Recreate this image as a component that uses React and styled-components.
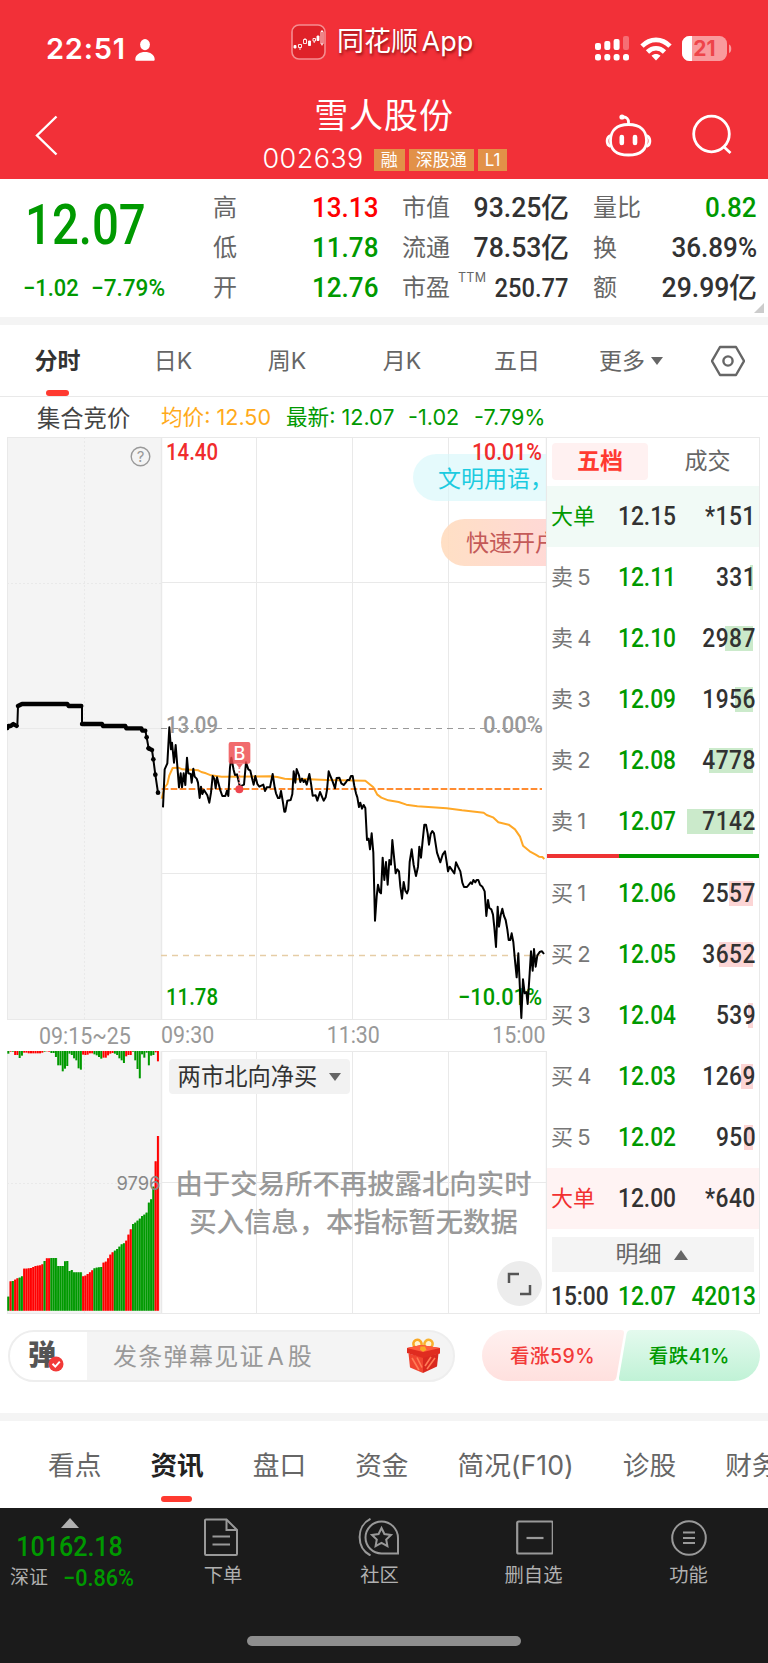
import React from "react"
import styled, { createGlobalStyle, css } from "styled-components"

const theme = {
  colors: {
    red: "#f23038",
    up: "#ff0000",
    down: "#009900",
    accent: "#ff3a30",
    text: "#323232",
    label: "#666666",
    muted: "#999999",
    line: "#e9e9e9",
    gray: "#f4f4f4",
    dark: "#1b1b1b",
  },
  fonts: {
    text: `Inter, "Noto Sans CJK SC", sans-serif`,
    num: `Roboto, "Noto Sans CJK SC", sans-serif`,
  },
}

const GlobalStyle = createGlobalStyle`
  * { box-sizing: border-box; }
  body {
    margin: 0;
    background: #fff;
    font-family: ${theme.fonts.text};
    line-height: 1.25;
    color: ${theme.colors.text};
  }
  svg { display: block; flex: none; }
`

const flexCenter = css`
  display: flex;
  align-items: center;
  justify-content: center;
`

const Page = styled.div`
  width: 768px;
  height: 1663px;
  overflow: hidden;
  display: flex;
  flex-direction: column;
`

// condensed digits, squeezed towards the side they are aligned to
const Num = styled.span`
  display: inline-block;
  font-family: ${theme.fonts.num};
  font-weight: ${p => p.$weight || 500};
  font-size: ${p => p.$size || 28}px;
  letter-spacing: ${p => p.$ls || 0}px;
  transform: scaleX(${p => p.$sx || 0.91});
  transform-origin: ${p => p.$from || "left"} center;
  color: ${p => p.$color || theme.colors.text};
  white-space: pre;
`

const Gap = styled.div`
  height: 8px;
  flex: none;
  background: ${theme.colors.gray};
`

/* ---------- header ---------- */

const Header = styled.header`
  height: 179px;
  flex: none;
  background: ${theme.colors.red};
  color: #fff;
`

const StatusBar = styled.div`
  height: 92px;
  display: grid;
  grid-template-columns: 244px 1fr 178px;
`

const Clock = styled.div`
  display: flex;
  align-items: center;
  gap: 9px;
  padding: 7px 0 0 46px;
  font-size: 29px;
  font-weight: 600;
  letter-spacing: 0.8px;
`

const AppBrand = styled.div`
  display: flex;
  align-items: center;
  gap: 11px;
  padding: 0 0 8px 47px;
  font-size: 27px;
  word-spacing: -4px;
  text-shadow: 1px 2px 3px rgba(90, 0, 0, 0.7);
  white-space: pre;
`

const StatusIcons = styled.div`
  display: flex;
  align-items: center;
  gap: 10px;
  padding: 5px 0 0 5px;
`

const TitleBar = styled.div`
  height: 87px;
  display: grid;
  grid-template-columns: 230px 1fr 230px;
`

const BackSlot = styled.div`
  padding: 23px 0 0 35px;
`

const TitleSlot = styled.div`
  display: flex;
  flex-direction: column;
  align-items: center;
`

const StockName = styled.h1`
  margin: 3px 0 0;
  font-size: 34px;
  line-height: 41px;
  font-weight: 400;
  letter-spacing: 0.9px;
`

const CodeRow = styled.div`
  display: flex;
  align-items: center;
  gap: 4px;
  height: 28px;
  margin: 9px 0 0 2px;
  font-size: 27px;
  font-weight: 300;
  line-height: 28px;
  span {
    margin-right: 6px;
    letter-spacing: 0.4px;
  }
`

const Tag = styled.em`
  font-style: normal;
  font-weight: 400;
  height: 22px;
  margin-top: 1px;
  padding: 0 7px;
  line-height: 22px;
  background: #e29148;
  font-size: 17px;
`

const TitleActions = styled.div`
  display: flex;
  gap: 40px;
  padding: 21px 0 0 67px;
`

/* ---------- quote ---------- */

const Quote = styled.section`
  position: relative;
  height: 138px;
  flex: none;
  display: grid;
  grid-template-columns: 189px 165px 167px 164px;
  column-gap: 24px;
`

const PriceBlock = styled.div`
  padding: 16px 0 0 23px;
`

const BigPrice = styled.div`
  height: 60px;
  line-height: 60px;
  padding-left: 2px;
`

const ChangeRow = styled.div`
  display: flex;
  gap: 7px;
  margin-top: 19px;
  line-height: 28px;
`

const StatColumn = styled.div`
  padding-top: 9px;
`

const Stat = styled.div`
  height: 40px;
  display: flex;
  align-items: center;
  font-size: 24px;
  line-height: 36px;
  color: ${theme.colors.label};
  white-space: nowrap;
  sup {
    font-size: 12.5px;
    line-height: 13px;
    align-self: flex-start;
    margin: 3px 0 0 8px;
    letter-spacing: 0.3px;
  }
`

const StatValue = styled.span`
  display: flex;
  align-items: center;
  margin-left: auto;
  b {
    font-weight: 500;
    font-size: 28px;
    color: ${theme.colors.text};
  }
`

const Corner = styled.i`
  position: absolute;
  right: 4px;
  bottom: 4px;
  border: 5px solid #ccc;
  border-top-color: transparent;
  border-left-color: transparent;
`

/* ---------- period tabs ---------- */

const PeriodTabs = styled.nav`
  height: 72px;
  flex: none;
  display: grid;
  grid-template-columns: 115px 116px 112px 118px 112px 116px 1fr;
  border-bottom: 1px solid ${theme.colors.line};
`

const PeriodTab = styled.div`
  ${flexCenter};
  position: relative;
  gap: 6px;
  padding: 1px ${p => p.$shift || 0}px 0 0;
  font-size: 23px;
  color: ${p => (p.$active ? "#323232" : theme.colors.label)};
  font-weight: ${p => (p.$active ? 700 : 400)};
  ${p => p.$active && css`
    &::after {
      content: "";
      position: absolute;
      left: 46px;
      bottom: 0;
      width: 23px;
      height: 6px;
      border-radius: 3px;
      background: ${theme.colors.accent};
    }
  `}
`

const Caret = styled.i`
  border: ${p => p.$half || 6}px solid transparent;
  border-bottom: 0;
  border-top: 8px solid #666;
  ${p => p.$up && css`
    border-top: 0;
    border-bottom: 10px solid ${p.$color || "#666"};
  `}
`

const InfoRow = styled.div`
  height: 40px;
  flex: none;
  display: grid;
  grid-template-columns: 124px 125px 122px 66px 1fr;
  align-items: center;
  padding: 0 0 0 37px;
  font-size: 21.6px;
  color: ${theme.colors.down};
  white-space: pre;
`

const AuctionLabel = styled.span`
  font-size: 23.3px;
  padding-top: 4px;
  color: #444;
`

const Average = styled.span`
  color: #ffaa1a;
`

/* ---------- chart ---------- */

const Board = styled.section`
  height: 877px;
  flex: none;
  display: grid;
  grid-template-columns: 540px 213px;
  padding-left: 7px;
`

const ChartColumn = styled.div`
  position: relative;
  overflow: hidden;
`

const TimeAxis = styled.div`
  height: 31px;
  display: grid;
  grid-template-columns: 122px 1fr 1fr 1fr;
  align-items: start;
  padding: 0 1px 0 32px;
`

const AxisTime = styled(Num)`
  justify-self: ${p => p.$from || "left"};
  line-height: ${p => p.$lh || 30}px;
`

const Barrage = styled.div`
  position: absolute;
  left: ${p => p.$left}px;
  top: ${p => p.$top}px;
  width: 200px;
  height: 47px;
  border-radius: 24px;
  padding-left: 25px;
  font-size: 23px;
  line-height: ${p => p.$lh || 49}px;
  color: ${p => p.$color};
  background: ${p => p.$bg};
`

const ChartMask = styled.div`
  position: absolute;
  left: 0;
  top: 0;
  width: 539px;
  height: 583px;
  overflow: hidden;
`

const ChartOverlay = styled.div`
  position: absolute;
  left: 0;
  top: 0;
`

const IndicatorSelect = styled.div`
  position: absolute;
  left: 162px;
  top: 622px;
  width: 181px;
  height: 35px;
  padding-top: 1px;
  border-radius: 4px;
  background: #f2f2f2;
  ${flexCenter};
  gap: 12px;
  font-size: 23.3px;
  color: #323232;
`

const EmptyNote = styled.p`
  position: absolute;
  left: 154px;
  top: 728px;
  width: 385px;
  margin: 0;
  text-align: center;
  font-size: 27.4px;
  font-weight: 500;
  line-height: 38px;
  color: ${theme.colors.muted};
`

const ExpandButton = styled.div`
  position: absolute;
  left: 490px;
  top: 824px;
  width: 45px;
  height: 45px;
  border-radius: 50%;
  background: #ececec;
  ${flexCenter};
`

/* ---------- order book ---------- */

const Book = styled.aside`
  height: 877px;
  border: 1px solid ${theme.colors.line};
  border-left: 0;
`

const BookTabs = styled.div`
  height: 48px;
  display: grid;
  grid-template-columns: 96px 1fr;
  column-gap: 11px;
  padding: 5px 3px 6px 5px;
`

const BookTab = styled.div`
  ${flexCenter};
  border-radius: 4px;
  font-size: 23px;
  color: ${p => (p.$active ? theme.colors.accent : theme.colors.label)};
  background: ${p => (p.$active ? "#fff1f1" : "none")};
  font-weight: ${p => (p.$active ? 700 : 400)};
`

const BookRow = styled.div`
  height: ${p => p.$h || 61}px;
  display: grid;
  grid-template-columns: 67px 60px 1fr;
  align-items: center;
  padding: 0 3px 0 4px;
  font-size: 22px;
  word-spacing: -2px;
  color: ${p => p.$color || "#777"};
  background: ${p => p.$bg || "none"};
  white-space: pre;
`

const Volume = styled.div`
  position: relative;
  height: 25px;
  display: flex;
  align-items: center;
  justify-content: flex-end;
`

const VolumeBar = styled.i`
  position: absolute;
  right: 3px;
  top: 0;
  height: 25px;
  background: ${p => p.$bg};
`

const VolumeNum = styled(Num)`
  position: relative;
`

const Ratio = styled.div`
  height: 4px;
  margin: 2px 0 5px;
  background: linear-gradient(90deg, #ee3333 34%, ${theme.colors.down} 34%);
`

const DetailToggle = styled.div`
  ${flexCenter};
  gap: 12px;
  height: 35px;
  margin: 8px 5px 7px;
  padding-right: 3px;
  background: ${theme.colors.gray};
  font-size: 23px;
  color: ${theme.colors.label};
`

/* ---------- comment bar ---------- */

const CommentBar = styled.div`
  height: 99px;
  flex: none;
  display: flex;
  align-items: flex-start;
  justify-content: space-between;
  padding: 16px 8px 0;
`

const CommentInput = styled.div`
  width: 447px;
  height: 52px;
  display: flex;
  align-items: center;
  overflow: hidden;
  border: 2px solid #eee;
  border-radius: 26px;
  padding-right: 13px;
  background: ${theme.colors.gray};
  font-size: 24px;
  letter-spacing: 1.3px;
  word-spacing: -5.5px;
  color: ${theme.colors.muted};
`

const BarrageToggle = styled.div`
  position: relative;
  width: 77px;
  height: 48px;
  padding-left: 18px;
  margin-right: 26px;
  background: #fff;
  font-size: 28px;
  line-height: 46px;
  font-weight: 900;
  color: #555;
  svg {
    position: absolute;
    left: 38px;
    top: 24px;
  }
`

const Placeholder = styled.span`
  flex: 1;
  padding-top: 1px;
`

const Poll = styled.div`
  position: relative;
  width: 278px;
  height: 51px;
`

const PollLabels = styled.div`
  position: absolute;
  inset: 0;
  display: flex;
  justify-content: space-between;
  padding: 0 30px 0 28px;
  font-size: 19.5px;
  font-weight: 500;
  letter-spacing: 0.5px;
  line-height: 53px;
  color: #f23a38;
  b {
    font-weight: 500;
    color: ${theme.colors.down};
  }
`

/* ---------- news tabs ---------- */

const NewsTabs = styled.nav`
  height: 87px;
  flex: none;
  display: flex;
  gap: 49px;
  padding: 0 0 0 48px;
  white-space: nowrap;
`

const NewsTab = styled.div`
  position: relative;
  flex: none;
  line-height: 89px;
  font-size: 26.7px;
  color: ${p => (p.$active ? "#222" : theme.colors.label)};
  font-weight: ${p => (p.$active ? 700 : 400)};
  ${p => p.$active && css`
    &::after {
      content: "";
      position: absolute;
      left: 11px;
      top: 75px;
      width: 31px;
      height: 6px;
      border-radius: 3px;
      background: ${theme.colors.accent};
    }
  `}
`

/* ---------- bottom bar ---------- */

const BottomBar = styled.footer`
  height: 155px;
  flex: none;
  background: ${theme.colors.dark};
  display: flex;
  flex-direction: column;
  align-items: center;
  justify-content: space-between;
  padding-bottom: 17px;
`

const BottomRow = styled.div`
  width: 768px;
  display: grid;
  grid-template-columns: 145px 156px 157px 151px 159px;
`

const IndexBox = styled.div`
  display: flex;
  flex-direction: column;
  align-items: center;
  padding: 10px 6px 0 0;
  line-height: 38px;
`

const IndexRow = styled.div`
  display: flex;
  align-items: center;
  gap: 15px;
  align-self: flex-start;
  margin: -2px -20px 0 10px;
  line-height: 28px;
  font-size: 19px;
  white-space: nowrap;
  color: #b0b0b0;
`

const NavItem = styled.div`
  display: flex;
  flex-direction: column;
  align-items: center;
  gap: 6px;
  padding-top: 10px;
  font-size: 19.3px;
  line-height: 26px;
  color: #b0b0b0;
`

const HomeIndicator = styled.div`
  width: 274px;
  height: 10px;
  border-radius: 5px;
  background: #8e8e8e;
`

/* ---------- icons ---------- */

const PersonIcon = () => (
  <svg width="20" height="22" viewBox="0 0 20 22" fill="#fff">
    <ellipse cx="10" cy="5.6" rx="4.9" ry="5.6" />
    <path d="M0.3 20.5C0.3 15.5 5 13 10 13s9.7 2.5 9.7 7.5c0 0.8-0.5 1.3-1.3 1.3H1.6c-0.8 0-1.3-0.5-1.3-1.3z" />
  </svg>
)

const BrandIcon = () => (
  <svg width="35" height="36" viewBox="0 0 35 36" fill="none">
    <rect x="1" y="1" width="33" height="34" rx="7" fill="#df2229" stroke="#f58d90" strokeWidth="1.6" />
    <g stroke="#fff" strokeWidth="0.9">
      <path fill="#fff" d="M3 21.500h2v2.500H3zM17.500 17h2v4.500h-2zM26 12h2v4.500h-2z" />
      <path d="M7.500 20.500h3v3h-3zM9 23.500v2.500M12.500 15.500h3v4h-3zM14 14v1.500M22 14.500h2.500v2.500H22zM23.200 17v2M30 7.500h2V20h-2zM31 6v1.500M31 20v1.500" />
    </g>
  </svg>
)

const SignalIcon = () => (
  <svg width="35" height="25" viewBox="0 0 35 25" fill="#fff">
    <rect x="0" y="7" width="6" height="7" rx="2" />
    <rect x="9.300" y="5" width="6" height="9" rx="2" />
    <rect x="18.600" y="3" width="6" height="11" rx="2" />
    <rect x="28" y="0" width="6" height="14" rx="2" opacity="0.3" />
    {[0, 9.3, 18.6, 28].map(x => (
      <rect key={x} x={x} y="18" width="6" height="6.500" rx="2.500" />
    ))}
  </svg>
)

const WifiIcon = () => (
  <svg width="32" height="24" viewBox="0 0 32 24" fill="none" stroke="#fff" strokeWidth="4.600">
    <path d="M2 9.200C10 0.800 22 0.800 30 9.200" />
    <path d="M7.500 15C12.500 10 19.500 10 24.500 15" />
    <path d="M16 23.500l-4.500-4.800c2.600-2.200 6.400-2.200 9 0z" fill="#fff" stroke="none" />
  </svg>
)

const BatteryIcon = () => (
  <svg width="50" height="26" viewBox="0 0 50 26">
    <rect width="45" height="25" rx="7.500" fill="#f99a9d" />
    <path d="M7.500 0H10v25H7.500A7.500 7.500 0 0 1 0 17.500v-10A7.500 7.500 0 0 1 7.500 0z" fill="#fff" />
    <path d="M47 8.500c3 1 3 7.500 0 8.500z" fill="#f99a9d" />
    <text x="22.500" y="20" textAnchor="middle" fontFamily="Inter" fontWeight="700" fontSize="21" fill="#ee4449">21</text>
  </svg>
)

const BackIcon = () => (
  <svg width="23" height="41" viewBox="0 0 23 41" fill="none" stroke="#fff" strokeWidth="2.400">
    <path d="M21.500 1.500L2 20.500l19.500 19" />
  </svg>
)

const RobotIcon = () => (
  <svg width="47" height="44" viewBox="0 0 47 44" fill="none" stroke="#fff" strokeWidth="2.800">
    <path d="M23.500 11.500C36 11.500 41.500 18 41.500 27.500S36 42 23.500 42S5.500 37 5.500 27.500S11 11.500 23.500 11.500z" />
    <path d="M5.500 22.500C1 24 1 32 5.500 33.500M41.500 22.500C46 24 46 32 41.500 33.500" />
    <path d="M23.500 11.500V9c0-3-2-5-5-5" />
    <circle cx="17" cy="4" r="2.600" fill="#fff" stroke="none" />
    <path d="M16.800 24v6M30 24v6" strokeWidth="4.600" strokeLinecap="round" />
  </svg>
)

const SearchIcon = () => (
  <svg width="40" height="42" viewBox="0 0 40 42" fill="none" stroke="#fff" strokeWidth="2.800">
    <circle cx="19.500" cy="21" r="17.800" />
    <path d="M31.500 33.500l7 6.500" />
  </svg>
)

const HexIcon = () => (
  <svg width="34" height="32" viewBox="0 0 34 32" fill="none" stroke="#666" strokeWidth="2.400">
    <path d="M9 2h16l8 14-8 14H9L1 16z" strokeLinejoin="round" />
    <circle cx="17" cy="16" r="4.600" />
  </svg>
)

const ExpandIcon = () => (
  <svg width="25" height="24" viewBox="0 0 25 24" fill="none" stroke="#555" strokeWidth="2.500">
    <path d="M2 11V2h10M23 13v9H13" />
  </svg>
)

const CheckBadge = () => (
  <svg width="16" height="16" viewBox="0 0 16 16" fill="none">
    <circle cx="8" cy="8" r="7.500" fill="#f23a38" />
    <path d="M4.500 7.800l2.800 2.800 4.500-5" stroke="#fff" strokeWidth="2" />
  </svg>
)

const GiftIcon = () => (
  <svg width="33" height="36" viewBox="0 0 33 36">
    <ellipse cx="10.500" cy="6" rx="4" ry="4.300" fill="#fff3d0" stroke="#f9a825" strokeWidth="2.600" transform="rotate(-25 10.500 6)" />
    <ellipse cx="21.500" cy="6" rx="4" ry="4.300" fill="#fff3d0" stroke="#f9b22f" strokeWidth="2.600" transform="rotate(25 21.500 6)" />
    <path d="M1.500 15.500L16 19v16L3 29.500z" fill="#f0442f" />
    <path d="M31.500 15.500L16 19v16l14-6.500z" fill="#d9281f" />
    <path d="M5 20l7 12M10 19.500l5 10M28 20l-8 11M24 19l-6 9" stroke="#ff7b55" strokeWidth="1.600" />
    <path d="M0 10l14-3 19 3v5.500L16 20 0 15z" fill="#e02c20" />
    <path d="M0 10l14-3 19 3-17 4z" fill="#ff5b3d" />
    <path d="M13.500 8.500h4.500l1.500 3.500-3.500 1.800-3-2z" fill="#f9a825" />
  </svg>
)

const PollShape = () => (
  <svg width="278" height="51" viewBox="0 0 278 51">
    <defs>
      <linearGradient id="bull" x1="0" y1="0" x2="0" y2="1">
        <stop offset="0" stopColor="#fff0ef" />
        <stop offset="1" stopColor="#ffe0de" />
      </linearGradient>
      <linearGradient id="bear" x1="0" y1="0" x2="0" y2="1">
        <stop offset="0" stopColor="#e4faee" />
        <stop offset="1" stopColor="#c0f2d6" />
      </linearGradient>
    </defs>
    <path d="M25.500 0H139q3.500 0 3 3.500L134.500 47q-0.800 4-4.500 4H25.500a25.500 25.500 0 0 1 0-51z" fill="url(#bull)" />
    <path d="M149 0H252.500a25.500 25.500 0 0 1 0 51H140q-3.500 0-3-3.500L144.500 4q0.800-4 4.500-4z" fill="url(#bear)" />
  </svg>
)

const OrderIcon = () => (
  <svg width="40" height="38" viewBox="0 0 40 38" fill="none" stroke="#999" strokeWidth="2">
    <path d="M3 1.500h20.500L34 12v24a1 1 0 0 1-1 1H3a1 1 0 0 1-1-1V2.500a1 1 0 0 1 1-1z" />
    <path d="M23.500 1.500V12H34M9.500 18.500h17.500M9.500 26.500h17.500" />
  </svg>
)

const CommunityIcon = () => (
  <svg width="44" height="38" viewBox="0 0 44 38" fill="none" stroke="#999" strokeWidth="2">
    <path d="M23.500 3.500A16.500 16.500 0 0 1 40 20v15.500H23.500a16 16 0 0 1 0-32z" />
    <path d="M12.500 0.800C-2 8 -2 30 12.500 37.500" />
    <path d="M23.500 10l2.900 6 6.600 0.900-4.800 4.600 1.200 6.600-5.900-3.200-5.900 3.200 1.200-6.600-4.800-4.600 6.600-0.900z" />
  </svg>
)

const RemoveIcon = () => (
  <svg width="38" height="38" viewBox="-1 0 38 38" fill="none" stroke="#999" strokeWidth="2.200">
    <rect x="1.200" y="3.500" width="35.600" height="32" rx="1.500" />
    <path d="M10.500 20h17" />
  </svg>
)

const MenuIcon = () => (
  <svg width="38" height="38" viewBox="0 0 38 38" fill="none" stroke="#999" strokeWidth="2">
    <circle cx="19" cy="20" r="16.800" />
    <path d="M13 14.500h12M13 20h12M13 25h12" />
  </svg>
)

/* ---------- chart data ---------- */

// intraday price, three units per pixel
const PRICE =
  "9,382 14,268 22,250 28,142 33,208 36,188 42,248 47,195 57,322 62,280 66,322 71,280 76,315 81,233 85,280 92,282 95,308 100,266 104,290 110,296 114,308 119,354 123,320 127,342 132,330 142,346 148,368 153,338 158,288 163,296 167,325 171,292 180,328 187,348 196,348 201,332 205,348 210,262 214,233 221,270 225,285 231,283 240,322 247,316 252,314 258,247 265,268 271,272 276,294 281,314 286,288 292,312 298,320 310,314 315,333 320,322 330,322 338,282 344,322 348,340 354,354 359,354 363,333 368,362 373,395 376,395 382,362 392,360 397,342 401,274 406,308 410,267 417,286 421,306 426,296 431,306 435,300 440,314 448,282 453,310 458,347 467,346 472,362 480,336 491,362 497,352 501,330 506,274 511,288 517,302 525,325 530,294 538,293 544,310 551,315 557,308 562,300 568,300 573,288 578,288 583,318 588,340 592,352 597,381 601,368 606,386 611,375 616,384 621,480 626,476 630,508 635,460 640,518 645,722 650,650 654,614 659,636 663,640 668,533 673,600 678,546 683,614 688,540 693,554 697,480 707,580 712,568 717,574 721,620 726,656 731,606 736,632 741,640 745,628 749,546 755,508 761,555 768,588 774,560 778,500 783,533 788,482 793,434 798,434 803,460 807,494 812,462 817,453 822,460 831,518 841,547 848,524 855,514 860,546 864,574 869,560 883,580 888,547 894,560 901,574 907,608 912,621 921,621 932,607 936,612 940,600 946,607 950,600 955,600 960,614 967,620 974,634 979,708 984,660 988,684 994,688 999,704 1003,742 1008,801 1013,680 1017,740 1022,706 1027,686 1032,708 1037,720 1042,748 1046,780 1051,780 1055,760 1060,786 1065,842 1070,892 1075,820 1080,930 1084,1014 1089,898 1094,940 1099,936 1103,972 1109,880 1113,814 1118,872 1122,807 1127,860 1132,826 1140,815 1146,814 1152,822"

const AVERAGE =
  "5,356 14,322 22,312 28,286 38,264 55,263 67,268 115,271 124,276 138,280 153,286 185,290 330,289 352,291 374,296 398,298 430,297 500,300 616,302 640,322 652,344 664,353 685,361 716,366 739,374 772,379 860,385 906,391 971,398 980,405 999,412 1015,427 1046,434 1065,448 1080,470 1089,497 1109,514 1127,524 1137,530 1147,531 1153,537"

// call auction price before the open
const AUCTION =
  "22,898 24,888 32,888 40,882 52,888 54,828 66,822 202,822 206,828 246,828 246,882 306,882 308,888 376,888 378,895 424,895 426,902 436,902 440,922 446,955 456,960 460,988 466,1034 474,1088"
const AUCTION_RUNS =
  "M22 894L25 888H32L40 882 50 888M54 828L66 822H202L206 828H244M246 882H306L309 888H376L379 895H424L427 902H436M446 955L456 960"
const AUCTION_DOTS = [[440, 922], [446, 955], [460, 988], [466, 1034], [474, 1088]]

// [color, unmatched volume, matched volume] per auction tick
const AUCTION_BARS = [
  ["g", 8, 42], ["r", 2, 88], ["g", 2, 89], ["r", 12, 93], ["r", 12, 97], ["g", 21, 99], ["g", 14, 103],
  ["r", 5, 126], ["r", 5, 126], ["r", 7, 127], ["r", 7, 128], ["r", 7, 131], ["r", 7, 134], ["r", 7, 135], ["r", 7, 136],
  ["r", 5, 139], ["g", 2, 149], ["r", 1, 157], ["r", 2, 157], ["g", 6, 158], ["g", 6, 158], ["g", 18, 158],
  ["g", 43, 134], ["g", 43, 134], ["g", 61, 134], ["g", 53, 148], ["g", 45, 149], ["g", 8, 119], ["g", 12, 122],
  ["g", 22, 115], ["g", 28, 115], ["g", 52, 115], ["g", 56, 115], ["r", 11, 103], ["r", 12, 105], ["r", 11, 110],
  ["r", 7, 115], ["r", 7, 121], ["g", 10, 127], ["g", 13, 129], ["g", 18, 130], ["g", 23, 131], ["r", 20, 144],
  ["r", 20, 147], ["r", 13, 157], ["r", 8, 168], ["r", 6, 175], ["g", 8, 180], ["g", 12, 185], ["g", 22, 192],
  ["g", 28, 199], ["g", 36, 202], ["r", 16, 210], ["r", 12, 228], ["r", 12, 244], ["g", 2, 260], ["g", 28, 264],
  ["g", 54, 270], ["g", 82, 276], ["g", 10, 284], ["g", 20, 288], ["g", 5, 294], ["g", 43, 324], ["g", 14, 334],
  ["g", 12, 372], ["r", 4, 448], ["r", 31, 524],
]

const DinText = ({ x, y, w, color, size = 24, children }) => (
  <text x={x} y={y} textLength={w} lengthAdjust="spacingAndGlyphs" fontFamily="Roboto" fontWeight="500" fontSize={size} fill={color}>
    {children}
  </text>
)

const PriceGrid = () => (
  <svg width="540" height="583" viewBox="7 437 540 583" fill="none">
    <rect x="7" y="437" width="154" height="583" fill="#f4f4f4" />
    <g stroke="#e9e9e9">
      <path d="M7.500 437V1020M7 437.500H547M7 728.500H161M161 582.500H546M161 873.500H546M7 1019.500H546M256.500 437V1020M352.500 437V1020M448.500 437V1020" />
      <path d="M161.500 437V1020M546.500 437V1020" strokeWidth="1.500" />
      <path d="M84.500 437V1020M7 583.500H161" strokeDasharray="2 2" />
    </g>
  </svg>
)

const PriceLines = () => (
  <svg width="540" height="583" viewBox="7 437 540 583" fill="none">
    <path d="M161 728.500H546" stroke="#999" strokeWidth="1.200" strokeDasharray="6 5" />
    <path d="M161 955.500H544" stroke="#e6cda6" strokeWidth="1.300" strokeDasharray="6 5" />
    <DinText x="166" y="733" w="52" color="#999">13.09</DinText>
    <DinText x="483" y="733" w="60" color="#999">0.00%</DinText>
    <DinText x="166" y="1005" w="52" color="#009900">11.78</DinText>
    <DinText x="458" y="1005" w="84" color="#009900">−10.01%</DinText>
    <g transform="translate(160 680) scale(0.333333)" strokeLinejoin="round">
      <polyline points={AVERAGE} stroke="#ffa827" strokeWidth="6" />
      <path d="M5 327H1146" stroke="#ff8c32" strokeWidth="6" strokeDasharray="20 7" />
      <polyline points={PRICE} stroke="#000" strokeWidth="6" />
      <rect x="206" y="186" width="65" height="65" rx="6" fill="#ee4a4d" fillOpacity="0.82" />
      <path d="M228 251h21l-10 14z" fill="#f0686b" />
      <path d="M238 262V322" stroke="#f58a8c" strokeWidth="5" strokeDasharray="5 6" />
      <circle cx="238" cy="328" r="12" fill="#ee4650" />
      <text x="238.500" y="239" textAnchor="middle" fontFamily="Inter" fontSize="54" fontWeight="500" fill="#fff">B</text>
    </g>
    <g transform="translate(0 430) scale(0.333333)" stroke="#000" strokeLinejoin="round">
      <polyline points={AUCTION} strokeWidth="6" />
      <path d={AUCTION_RUNS} strokeWidth="13" strokeLinecap="round" />
      {AUCTION_DOTS.map(([x, y]) => <circle key={x} cx={x} cy={y} r="7" fill="#000" stroke="none" />)}
    </g>
    <DinText x="166" y="460" w="52" color="#f02c2c">14.40</DinText>
    <DinText x="472" y="460" w="70" color="#f02c2c">10.01%</DinText>
    <circle cx="140.500" cy="456.500" r="9.300" stroke="#999" strokeWidth="1.400" />
    <text x="140.500" y="462" textAnchor="middle" fontFamily="Inter" fontSize="15" fill="#999">?</text>
  </svg>
)

const VolumeChart = () => (
  <svg width="540" height="263" viewBox="7 1051 540 263" fill="none">
    <rect x="7" y="1051" width="154" height="263" fill="#f4f4f4" />
    <g stroke="#e9e9e9">
      <path d="M7.500 1051V1314M161 1051.500H546M161 1182.500H546M7 1313.500H547M256.500 1051V1314M352.500 1051V1314M448.500 1051V1314" />
      <path d="M161.500 1051V1314M546.500 1051V1314" strokeWidth="1.500" />
      <path d="M84.500 1051V1313M7 1183.500H161" strokeDasharray="2 2" />
    </g>
    <g transform="translate(0 1010) scale(0.333333)">
      {AUCTION_BARS.map(([c, top, h], i) => {
        const x = 22 + i * 6.8
        const fill = c === "g" ? "#009900" : "#ff0000"
        return (
          <g key={i} fill={fill}>
            <rect x={x} y={902 - h} width="5.600" height={h} />
            <rect x={x} y={902 - h} width="6.800" height={h} fillOpacity="0.55" />
            <rect x={x} y="123" width="6" height={top} />
          </g>
        )
      })}
    </g>
    <text x="116.500" y="1190" textLength="44" lengthAdjust="spacingAndGlyphs" fontFamily="Inter" fontSize="19" fill="#888">9796</text>
  </svg>
)

/* ---------- content ---------- */

const STATS = [
  [{ label: "高", value: "13.13", color: "#ff0000" }, { label: "低", value: "11.78", color: "#009900" }, { label: "开", value: "12.76", color: "#009900" }],
  [{ label: "市值", value: "93.25", unit: "亿" }, { label: "流通", value: "78.53", unit: "亿" }, { label: "市盈", value: "250.77", sup: "TTM" }],
  [{ label: "量比", value: "0.82", color: "#009900" }, { label: "换", value: "36.89%" }, { label: "额", value: "29.99", unit: "亿" }],
]

const ASKS = [["卖 5", "12.11", 331], ["卖 4", "12.10", 2987], ["卖 3", "12.09", 1956], ["卖 2", "12.08", 4778], ["卖 1", "12.07", 7142]]
const BIDS = [["买 1", "12.06", 2557], ["买 2", "12.05", 3652], ["买 3", "12.04", 539], ["买 4", "12.03", 1269], ["买 5", "12.02", 950]]

const Level = ({ row, bg }) => {
  const [label, price, volume] = row
  return (
    <BookRow>
      <span>{label}</span>
      <Num $size={25} $color="#009900">{price}</Num>
      <Volume>
        <VolumeBar $bg={bg} style={{ width: volume / 108 }} />
        <VolumeNum $size={25} $ls={0.5} $from="right">{volume}</VolumeNum>
      </Volume>
    </BookRow>
  )
}

const BigOrder = ({ color, bg, price, volume }) => (
  <BookRow $color={color} $bg={bg}>
    <span>大单</span>
    <Num $size={25}>{price}</Num>
    <Volume><VolumeNum $size={25} $ls={0.5} $from="right">{volume}</VolumeNum></Volume>
  </BookRow>
)

const App = () => (
  <Page>
    <GlobalStyle />
    <Header>
      <StatusBar>
        <Clock>22:51<PersonIcon /></Clock>
        <AppBrand><BrandIcon />同花顺 App</AppBrand>
        <StatusIcons><SignalIcon /><WifiIcon /><BatteryIcon /></StatusIcons>
      </StatusBar>
      <TitleBar>
        <BackSlot><BackIcon /></BackSlot>
        <TitleSlot>
          <StockName>雪人股份</StockName>
          <CodeRow>
            <span>002639</span>
            <Tag>融</Tag>
            <Tag>深股通</Tag>
            <Tag>L1</Tag>
          </CodeRow>
        </TitleSlot>
        <TitleActions><RobotIcon /><SearchIcon /></TitleActions>
      </TitleBar>
    </Header>

    <Quote>
      <PriceBlock>
        <BigPrice><Num $size={55} $sx={0.86} $color="#009900">12.07</Num></BigPrice>
        <ChangeRow>
          <Num $size={24} $color="#009900">−1.02</Num>
          <Num $size={24} $sx={0.94} $color="#009900">−7.79%</Num>
        </ChangeRow>
      </PriceBlock>
      {STATS.map((column, i) => (
        <StatColumn key={i}>
          {column.map(({ label, value, color, unit, sup }) => (
            <Stat key={label}>
              {label}
              {sup && <sup>{sup}</sup>}
              <StatValue>
                <Num $size={sup ? 25.5 : 28} $sx={unit ? 0.95 : 0.93} $from="right" $color={color}>{value}</Num>
                {unit && <b>{unit}</b>}
              </StatValue>
            </Stat>
          ))}
        </StatColumn>
      ))}
      <Corner />
    </Quote>
    <Gap />

    <PeriodTabs>
      <PeriodTab $active>分时</PeriodTab>
      <PeriodTab>日K</PeriodTab>
      <PeriodTab>周K</PeriodTab>
      <PeriodTab>月K</PeriodTab>
      <PeriodTab>五日</PeriodTab>
      <PeriodTab>更多<Caret /></PeriodTab>
      <PeriodTab $shift={1}><HexIcon /></PeriodTab>
    </PeriodTabs>
    <InfoRow>
      <AuctionLabel>集合竞价</AuctionLabel>
      <Average>均价: 12.50</Average>
      <span>最新: 12.07</span>
      <span>-1.02</span>
      <span>-7.79%</span>
    </InfoRow>

    <Board>
      <ChartColumn>
        <PriceGrid />
        <TimeAxis>
          <AxisTime $size={23.5} $weight={400} $color="#999" $lh={33}>09:15~25</AxisTime>
          <AxisTime $size={23.5} $weight={400} $color="#999">09:30</AxisTime>
          <AxisTime $size={23.5} $weight={400} $color="#999" $from="center">11:30</AxisTime>
          <AxisTime $size={23.5} $weight={400} $color="#999" $from="right">15:00</AxisTime>
        </TimeAxis>
        <VolumeChart />
        <ChartMask>
          <Barrage $left={406} $top={17} $lh={51} $color="#1ccbe0" $bg="rgba(215, 247, 250, 0.65)">文明用语，</Barrage>
          <Barrage $left={434} $top={82} $color="#c45a58" $bg="linear-gradient(90deg, rgba(255, 220, 190, 0.9), rgba(255, 213, 208, 0.9) 50%)">快速开户</Barrage>
        </ChartMask>
        <ChartOverlay><PriceLines /></ChartOverlay>
        <IndicatorSelect>两市北向净买<Caret /></IndicatorSelect>
        <EmptyNote>由于交易所不再披露北向实时<br />买入信息，本指标暂无数据</EmptyNote>
        <ExpandButton><ExpandIcon /></ExpandButton>
      </ChartColumn>

      <Book>
        <BookTabs>
          <BookTab $active>五档</BookTab>
          <BookTab>成交</BookTab>
        </BookTabs>
        <BigOrder color="#009900" bg="#f1faf6" price="12.15" volume="*151" />
        {ASKS.map(row => <Level key={row[0]} row={row} bg="#cbeacb" />)}
        <Ratio />
        {BIDS.map(row => <Level key={row[0]} row={row} bg="#fcd5d5" />)}
        <BigOrder color="#f23030" bg="#fff3f3" price="12.00" volume="*640" />
        <DetailToggle>明细<Caret $up $half={7} /></DetailToggle>
        <BookRow $h={35}>
          <Num $size={25}>15:00</Num>
          <Num $size={25} $color="#009900">12.07</Num>
          <Volume><Num $size={25} $from="right" $color="#009900">42013</Num></Volume>
        </BookRow>
      </Book>
    </Board>

    <CommentBar>
      <CommentInput>
        <BarrageToggle>弹<CheckBadge /></BarrageToggle>
        <Placeholder>发条弹幕见证 A 股</Placeholder>
        <GiftIcon />
      </CommentInput>
      <Poll>
        <PollShape />
        <PollLabels><span>看涨59%</span><b>看跌41%</b></PollLabels>
      </Poll>
    </CommentBar>
    <Gap />

    <NewsTabs>
      <NewsTab>看点</NewsTab>
      <NewsTab $active>资讯</NewsTab>
      <NewsTab>盘口</NewsTab>
      <NewsTab>资金</NewsTab>
      <NewsTab>简况(F10)</NewsTab>
      <NewsTab>诊股</NewsTab>
      <NewsTab>财务</NewsTab>
    </NewsTabs>

    <BottomBar>
      <BottomRow>
        <IndexBox>
          <Caret $up $half={9} $color="#b0b0b0" />
          <Num $size={27.5} $from="center" $color="#009900">10162.18</Num>
          <IndexRow>深证<Num $size={24} $sx={0.9} $color="#009900">−0.86%</Num></IndexRow>
        </IndexBox>
        <NavItem><OrderIcon />下单</NavItem>
        <NavItem><CommunityIcon />社区</NavItem>
        <NavItem><RemoveIcon />删自选</NavItem>
        <NavItem><MenuIcon />功能</NavItem>
      </BottomRow>
      <HomeIndicator />
    </BottomBar>
  </Page>
)

export default App
